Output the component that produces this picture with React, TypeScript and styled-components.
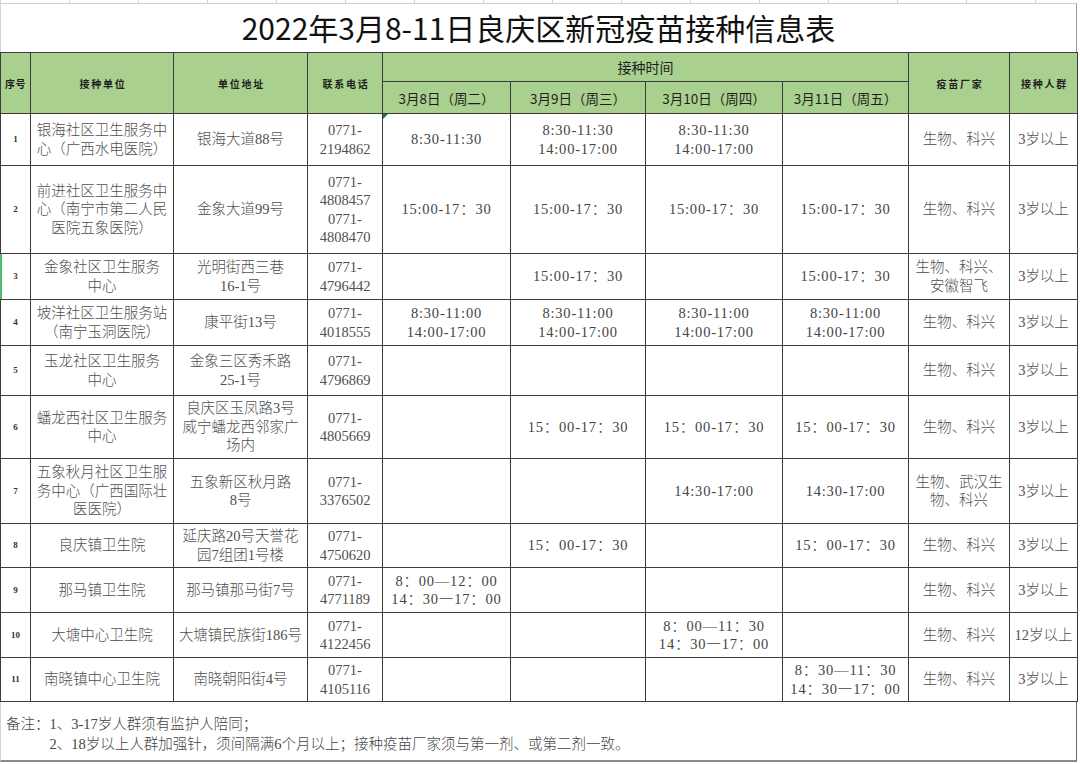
import React from 'react'
import styled, { createGlobalStyle, css } from 'styled-components'

const GlobalStyle = createGlobalStyle`
  body {
    margin: 0;
    background: #fff;
  }
`

const BODY_FONT = `"Liberation Serif", "Noto Sans CJK SC", serif`
const SANS_FONT = `"Noto Sans CJK SC", "Noto Sans", sans-serif`
const LINE = '#3c3c3c'
const GREEN = '#a9d08e'

const colWidths = [30, 143, 134, 75, 128, 135, 137, 126, 101, 68]

type Row = {
  h: number
  cells: string[]
  marked?: boolean
}

const rows: Row[] = [
  {
    h: 52,
    cells: [
      '1',
      '银海社区卫生服务中\n心（广西水电医院）',
      '银海大道88号',
      '0771-\n2194862',
      '8:30-11:30',
      '8:30-11:30\n14:00-17:00',
      '8:30-11:30\n14:00-17:00',
      '',
      '生物、科兴',
      '3岁以上'
    ]
  },
  {
    h: 88,
    cells: [
      '2',
      '前进社区卫生服务中\n心（南宁市第二人民\n医院五象医院）',
      '金象大道99号',
      '0771-\n4808457\n0771-\n4808470',
      '15:00-17：30',
      '15:00-17：30',
      '15:00-17：30',
      '15:00-17：30',
      '生物、科兴',
      '3岁以上'
    ]
  },
  {
    h: 46,
    marked: true,
    cells: [
      '3',
      '金象社区卫生服务\n中心',
      '光明街西三巷\n16-1号',
      '0771-\n4796442',
      '',
      '15:00-17：30',
      '',
      '15:00-17：30',
      '生物、科兴、\n安徽智飞',
      '3岁以上'
    ]
  },
  {
    h: 46,
    cells: [
      '4',
      '坡洋社区卫生服务站\n（南宁玉洞医院）',
      '康平街13号',
      '0771-\n4018555',
      '8:30-11:00\n14:00-17:00',
      '8:30-11:00\n14:00-17:00',
      '8:30-11:00\n14:00-17:00',
      '8:30-11:00\n14:00-17:00',
      '生物、科兴',
      '3岁以上'
    ]
  },
  {
    h: 50,
    cells: [
      '5',
      '玉龙社区卫生服务\n中心',
      '金象三区秀禾路\n25-1号',
      '0771-\n4796869',
      '',
      '',
      '',
      '',
      '生物、科兴',
      '3岁以上'
    ]
  },
  {
    h: 63,
    cells: [
      '6',
      '蟠龙西社区卫生服务\n中心',
      '良庆区玉凤路3号\n威宁蟠龙西邻家广\n场内',
      '0771-\n4805669',
      '',
      '15：00-17：30',
      '15：00-17：30',
      '15：00-17：30',
      '生物、科兴',
      '3岁以上'
    ]
  },
  {
    h: 65,
    cells: [
      '7',
      '五象秋月社区卫生服\n务中心（广西国际壮\n医医院）',
      '五象新区秋月路\n8号',
      '0771-\n3376502',
      '',
      '',
      '14:30-17:00',
      '14:30-17:00',
      '生物、武汉生\n物、科兴',
      '3岁以上'
    ]
  },
  {
    h: 44,
    cells: [
      '8',
      '良庆镇卫生院',
      '延庆路20号天誉花\n园7组团1号楼',
      '0771-\n4750620',
      '',
      '15：00-17：30',
      '',
      '15：00-17：30',
      '生物、科兴',
      '3岁以上'
    ]
  },
  {
    h: 45,
    cells: [
      '9',
      '那马镇卫生院',
      '那马镇那马街7号',
      '0771-\n4771189',
      '8：00—12：00\n14：30一17：00',
      '',
      '',
      '',
      '生物、科兴',
      '3岁以上'
    ]
  },
  {
    h: 45,
    cells: [
      '10',
      '大塘中心卫生院',
      '大塘镇民族街186号',
      '0771-\n4122456',
      '',
      '',
      '8：00—11：30\n14：30一17：00',
      '',
      '生物、科兴',
      '12岁以上'
    ]
  },
  {
    h: 44,
    cells: [
      '11',
      '南晓镇中心卫生院',
      '南晓朝阳街4号',
      '0771-\n4105116',
      '',
      '',
      '',
      '8：30—11：30\n14：30一17：00',
      '生物、科兴',
      '3岁以上'
    ]
  }
]

const dates = ['3月8日（周二）', '3月9日（周三）', '3月10日（周四）', '3月11日（周五）']

const Sheet = styled.div`
  width: 1077px;
  background: #fff;
`

const GridStrip = styled.div`
  height: 3px;
  background: repeating-linear-gradient(
    to right,
    #d2d2d2 0 1px,
    transparent 1px 69px
  );
`

const TitleBar = styled.div`
  box-sizing: border-box;
  height: 49px;
  border-top: 1px solid #cfcfcf;
  border-left: 1px solid #d6d6d6;
  border-right: 1px solid #9a9a9a;
  display: flex;
  align-items: center;
  justify-content: center;
  padding-bottom: 3px;
  font-family: ${SANS_FONT};
  font-size: 30px;
  color: #111;
`

const Table = styled.table`
  border-collapse: collapse;
  table-layout: fixed;
  width: 1077px;
`

const TableRow = styled.tr<{ $h: number }>`
  height: ${({ $h }) => $h}px;
`

const HeadCell = styled.th<{ $variant: 'label' | 'date' | 'group' | 'index' }>`
  background: ${GREEN};
  border: 1px solid ${LINE};
  padding: 0;
  text-align: center;
  vertical-align: middle;
  color: #1e1e1e;
  white-space: pre;
  font-family: ${SANS_FONT};

  ${({ $variant }) =>
    $variant === 'label' &&
    css`
      font-size: 10px;
      font-weight: 700;
      letter-spacing: 1.8px;
      padding-left: 2px;
    `}

  ${({ $variant }) =>
    $variant === 'index' &&
    css`
      font-size: 10px;
      font-weight: 700;
      letter-spacing: 0.5px;
    `}

  ${({ $variant }) =>
    $variant === 'date' &&
    css`
      font-size: 13.5px;
      font-weight: 400;
    `}

  ${({ $variant }) =>
    $variant === 'group' &&
    css`
      font-size: 14px;
      font-weight: 400;
    `}
`

const Cell = styled.td<{
  $index?: boolean
  $time?: boolean
  $marked?: boolean
  $corner?: boolean
}>`
  position: relative;
  border: 1px solid ${LINE};
  padding: 0 2px;
  text-align: center;
  vertical-align: middle;
  white-space: pre;
  font-family: ${BODY_FONT};
  font-size: 14.5px;
  font-weight: 300;
  line-height: 18.5px;
  color: #505050;

  ${({ $time }) =>
    $time &&
    css`
      letter-spacing: 0.8px;
      color: #444;
    `}

  ${({ $index }) =>
    $index &&
    css`
      font-size: 9px;
      font-weight: 700;
      color: #333;
    `}

  ${({ $marked }) =>
    $marked &&
    css`
      &::before {
        content: '';
        position: absolute;
        left: -1px;
        top: 0;
        bottom: 0;
        width: 2px;
        background: #4cbb6c;
      }
    `}

  ${({ $corner }) =>
    $corner &&
    css`
      &::after {
        content: '';
        position: absolute;
        left: 0;
        top: 0;
        border-top: 5px solid #217346;
        border-right: 5px solid transparent;
      }
    `}
`

const Footer = styled.div`
  box-sizing: border-box;
  height: 60px;
  display: flex;
  padding: 12px 0 0 5px;
  border-left: 1px solid #d6d6d6;
  border-right: 1px solid #6a6a6a;
  border-bottom: 2px solid #8a8a8a;
  font-family: ${BODY_FONT};
  font-size: 14.5px;
  font-weight: 300;
  line-height: 20px;
  color: #454545;
`

const NoteLabel = styled.span`
  flex: none;
`

const NoteList = styled.div`
  display: flex;
  flex-direction: column;
`

const App: React.FC = () => {
  return (
    <>
      <GlobalStyle />
      <Sheet>
        <GridStrip />
        <TitleBar>2022年3月8-11日良庆区新冠疫苗接种信息表</TitleBar>
        <Table>
          <colgroup>
            {colWidths.map((w, i) => (
              <col key={i} style={{ width: w }} />
            ))}
          </colgroup>
          <thead>
            <TableRow $h={29}>
              <HeadCell $variant="index" rowSpan={2}>
                序号
              </HeadCell>
              <HeadCell $variant="label" rowSpan={2}>
                接种单位
              </HeadCell>
              <HeadCell $variant="label" rowSpan={2}>
                单位地址
              </HeadCell>
              <HeadCell $variant="label" rowSpan={2}>
                联系电话
              </HeadCell>
              <HeadCell $variant="group" colSpan={4}>
                接种时间
              </HeadCell>
              <HeadCell $variant="label" rowSpan={2}>
                疫苗厂家
              </HeadCell>
              <HeadCell $variant="label" rowSpan={2}>
                接种人群
              </HeadCell>
            </TableRow>
            <TableRow $h={32}>
              {dates.map((d) => (
                <HeadCell key={d} $variant="date">
                  {d}
                </HeadCell>
              ))}
            </TableRow>
          </thead>
          <tbody>
            {rows.map((row, r) => (
              <TableRow key={r} $h={row.h}>
                {row.cells.map((text, c) => (
                  <Cell
                    key={c}
                    $index={c === 0}
                    $time={c >= 4 && c <= 7}
                    $marked={c === 0 && row.marked}
                    $corner={r === 0 && c === 4}
                  >
                    {text}
                  </Cell>
                ))}
              </TableRow>
            ))}
          </tbody>
        </Table>
        <Footer>
          <NoteLabel>备注：</NoteLabel>
          <NoteList>
            <span>1、3-17岁人群须有监护人陪同；</span>
            <span>2、18岁以上人群加强针，须间隔满6个月以上；接种疫苗厂家须与第一剂、或第二剂一致。</span>
          </NoteList>
        </Footer>
      </Sheet>
    </>
  )
}

export default App
